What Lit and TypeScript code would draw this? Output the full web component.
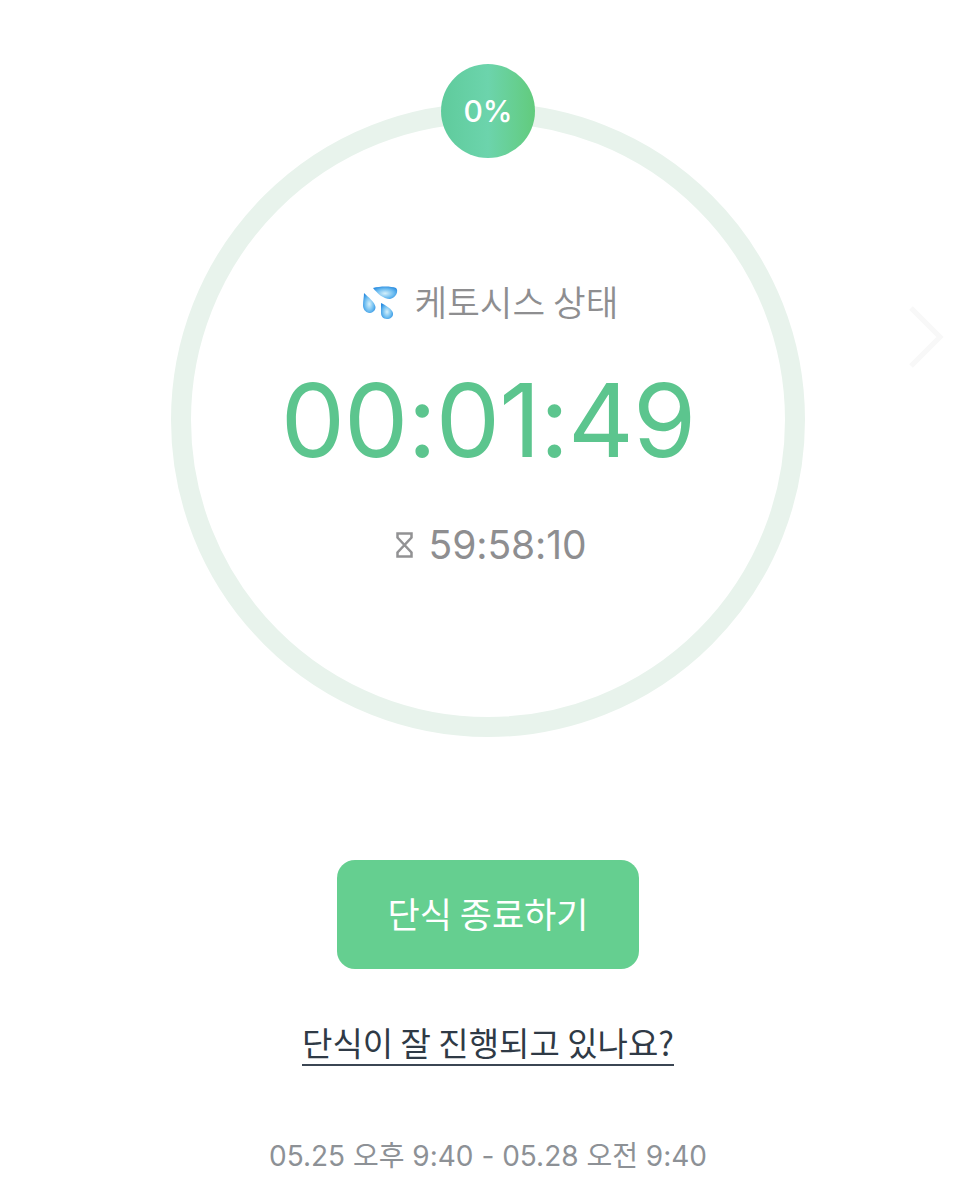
import { LitElement, html, css } from 'lit';
import { customElement } from 'lit/decorators.js';

@customElement('app-root')
class AppRoot extends LitElement {
    static styles = css`
        :host {
            display: block;
            width: 976px;
            height: 1200px;
            overflow: hidden;
            position: relative;
            background: #fff;
            font-family: Inter, "Noto Sans CJK KR", sans-serif;
        }
        .page {
            display: flex;
            flex-direction: column;
            align-items: center;
            padding-top: 103px;
        }
        .ring {
            position: relative;
            box-sizing: border-box;
            width: 634px;
            height: 634px;
            border: 20px solid #e8f3ec;
            border-radius: 50%;
            display: flex;
            flex-direction: column;
            align-items: center;
            padding-top: 152px;
        }
        .badge {
            position: absolute;
            top: -59px;
            left: 250px;
            width: 94px;
            height: 94px;
            border-radius: 50%;
            background: linear-gradient(90deg, #5fcb9c 0%, #6cd4ac 50%, #62cb7d 100%);
            color: #fff;
            font-size: 30px;
            font-weight: 500;
            display: flex;
            align-items: center;
            justify-content: center;
        }
        .status {
            display: flex;
            align-items: center;
            gap: 16px;
            height: 50px;
            padding-left: 5px;
            color: #8e8e90;
            font-size: 35.5px;
            font-family: "Noto Sans CJK KR", sans-serif;
            font-weight: 350;
        }
        .drops {
            margin-top: 6px;
        }
        .time {
            margin-top: 33px;
            color: #5cc58e;
            font-size: 102px;
            line-height: 124px;
            letter-spacing: -1px;
        }
        .remain {
            margin-top: 38px;
            padding-left: 6px;
            display: flex;
            align-items: center;
            gap: 16px;
            color: #8e8e90;
            font-size: 39px;
            line-height: 50px;
            letter-spacing: -0.1px;
        }
        .button {
            box-sizing: border-box;
            margin-top: 123px;
            width: 302px;
            height: 109px;
            padding-bottom: 4px;
            border-radius: 18px;
            background: #65cf90;
            color: #fff;
            font-family: "Noto Sans CJK KR", sans-serif;
            font-size: 35px;
            display: flex;
            align-items: center;
            justify-content: center;
        }
        .link {
            margin-top: 51px;
            color: #2f3a46;
            font-family: "Noto Sans CJK KR", sans-serif;
            font-size: 33px;
            line-height: 44px;
            height: 44px;
            border-bottom: 2px solid #3b4653;
        }
        .dates {
            margin-top: 68px;
            color: #8d9196;
            font-size: 28px;
            line-height: 44px;
        }
        .next {
            position: absolute;
            left: 908px;
            top: 305px;
        }
    `;

    render() {
        return html`
            <div class="page">
                <div class="ring">
                    <div class="badge">0%</div>
                    <div class="status">
                        <svg class="drops" width="36" height="34" viewBox="0 0 36 34">
                            <defs>
                                <radialGradient id="drop" cx="0.5" cy="0.55" r="0.6">
                                    <stop offset="0" stop-color="#d5f0fb"/>
                                    <stop offset="0.6" stop-color="#6cbcf0"/>
                                    <stop offset="1" stop-color="#2a8ce0"/>
                                </radialGradient>
                            </defs>
                            <path d="M10 2 C17 0 28 0 33 2 C36 5 33 12 27 13 C20 13 14 7 10 2 Z" fill="url(#drop)"/>
                            <path d="M1 7 C5 11 12 16 12.5 21 C12.5 25 9 27 6 27 C2 26 0 23 0 19 C0 15 1 11 1 7 Z" fill="url(#drop)"/>
                            <path d="M18 17 C22 19 29 23 30 27 C30.5 31 27 33 24 33 C20 33 18 30 18 27 C18 24 18 20 18 17 Z" fill="url(#drop)"/>
                        </svg>
                        <span>케토시스 상태</span>
                    </div>
                    <div class="time">00:01:49</div>
                    <div class="remain">
                        <svg width="17" height="26" viewBox="0 0 17 26" fill="none" stroke="#929294" stroke-width="2.5">
                            <path d="M1.5 1.5 H15.5 V5.5 L1.5 20.5 V24.5 H15.5 V20.5 L1.5 5.5 Z"/>
                        </svg>
                        <span>59:58:10</span>
                    </div>
                </div>
                <div class="button">단식 종료하기</div>
                <div class="link">단식이 잘 진행되고 있나요?</div>
                <div class="dates">05.25 오후 9:40 - 05.28 오전 9:40</div>
            </div>
            <svg class="next" width="36" height="64" viewBox="0 0 36 64" fill="none" stroke="#f8f8f8" stroke-width="5">
                <path d="M3 3 L32 32 L3 61"/>
            </svg>
        `;
    }
}

declare global {
    interface HTMLElementTagNameMap {
        'app-root': AppRoot;
    }
}
